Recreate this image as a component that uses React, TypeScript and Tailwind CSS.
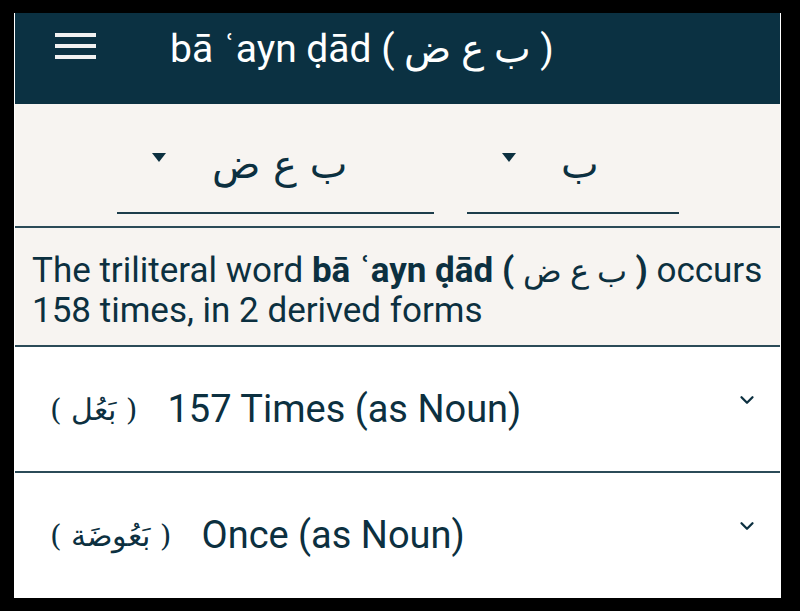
import { ChevronDown } from 'lucide-react'

const ink = 'text-[#0c3040]'

function RootSelect({ value, width, gap }: { value: string; width: string; gap: string }) {
  return (
    <div className={`${width} h-[110px] flex flex-col justify-end`}>
      <div className="flex items-center pl-[35px] pb-[24px]">
        <span className="w-0 h-0 border-l-[7px] border-r-[7px] border-t-[9px] border-l-transparent border-r-transparent border-t-[#0c3040] -mt-[14px]" />
        <span
          dir="rtl"
          className={`${gap} text-[40px] leading-[48px] ${ink} font-['DejaVu_Sans',sans-serif]`}
        >
          {value}
        </span>
      </div>
      <div className="h-[2px] bg-[#1d3d4b]" />
    </div>
  )
}

function FormRow({ arabic, label, last }: { arabic: string; label: string; last?: boolean }) {
  return (
    <div
      className={`flex items-center gap-[30px] pl-[35px] pr-[22px] ${
        last ? 'h-[124px]' : 'h-[126px] border-b-2 border-[#2b4b58]'
      }`}
    >
      <span className={`text-[30px] ${ink} font-['DejaVu_Serif',serif]`}>
        ( <span dir="rtl">{arabic}</span> )
      </span>
      <span className={`flex-1 text-[38px] ${ink}`}>{label}</span>
      <ChevronDown className="w-[22px] h-[22px] text-[#0c3040] -mt-[18px]" strokeWidth={2.5} />
    </div>
  )
}

export default function App() {
  return (
    <div className="w-[800px] h-[611px] bg-black pt-[13px] pl-[14px] pr-[19px] pb-[13px] font-['Roboto',sans-serif]">
      <div className="h-full flex flex-col bg-white border-l border-r border-b border-white overflow-hidden">
        {/* Header */}
        <div className="h-[91px] shrink-0 bg-[#0b3142] flex items-start pt-[19px]">
          <div className="ml-[40px] mt-[1px] w-[41px] flex flex-col gap-[7px]">
            <div className="h-[4px] bg-[#f1f1f1]" />
            <div className="h-[4px] bg-[#f1f1f1]" />
            <div className="h-[4px] bg-[#f1f1f1]" />
          </div>
          <h1 className="ml-[74px] -mt-[8px] text-[39px] leading-[50px] text-white">
            bā ʿayn ḍād ( <span dir="rtl">ب ع ض</span> )
          </h1>
        </div>

        {/* Root pickers */}
        <div className="h-[124px] shrink-0 bg-[#f7f4f1] border-b-2 border-[#2b4b58] flex pl-[102px] gap-[33px]">
          <RootSelect value="ب ع ض" width="w-[317px]" gap="ml-[46px]" />
          <RootSelect value="ب" width="w-[212px]" gap="ml-[45px]" />
        </div>

        {/* Summary */}
        <div className={`h-[119px] shrink-0 bg-[#f7f4f1] border-b-2 border-[#2b4b58] pl-[17px] pr-[4px] pt-[23px] text-[35px] leading-[40px] ${ink}`}>
          The triliteral word{' '}
          <b className="font-bold">
            bā ʿayn ḍād ( <span dir="rtl" className="font-normal text-[32px]">ب ع ض</span> )
          </b>{' '}
          occurs 158 times, in 2 derived forms
        </div>

        {/* Forms */}
        <FormRow arabic="بَعُل" label="157 Times (as Noun)" />
        <FormRow arabic="بَعُوضَة" label="Once (as Noun)" last />
      </div>
    </div>
  )
}
